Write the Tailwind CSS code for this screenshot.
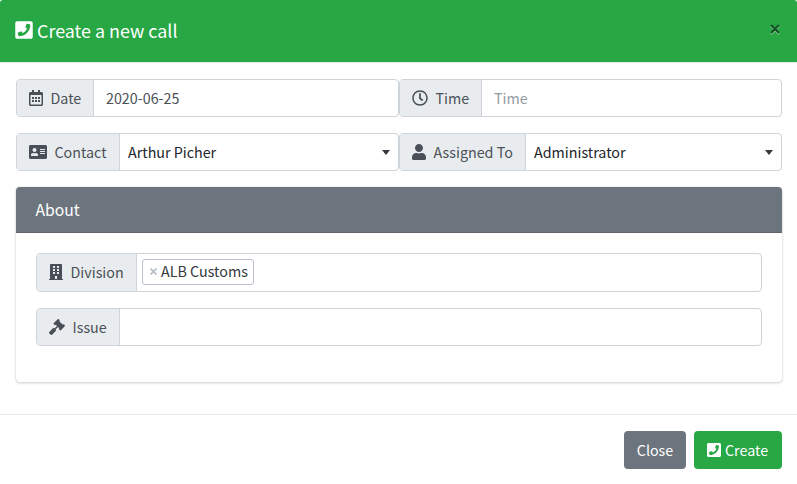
<!DOCTYPE html>
<html lang="en">
<head>
<meta charset="utf-8">
<title>Create a new call</title>
<script src="https://cdn.jsdelivr.net/npm/@tailwindcss/browser@4"></script>
</head>
<body class="bg-white">
<svg class="hidden">
  <symbol id="phone" viewBox="0 0 448 512"><path d="M400 32H48C21.49 32 0 53.49 0 80v352c0 26.51 21.49 48 48 48h352c26.51 0 48-21.49 48-48V80c0-26.51-21.49-48-48-48zM94 416c-7.033 0-13.057-4.873-14.616-11.627l-14.998-65a15 15 0 0 1 8.707-17.16l69.998-29.999a15 15 0 0 1 17.518 4.289l30.997 37.885c48.944-22.963 88.297-62.858 110.781-110.78l-37.886-30.997a15.001 15.001 0 0 1-4.289-17.518l30-69.998a15 15 0 0 1 17.16-8.707l65 14.998A14.997 14.997 0 0 1 384 126c0 160.292-129.945 290-290 290z"/></symbol>
</svg>
<main class="flex h-[484px] w-[797px] flex-col overflow-hidden bg-white font-['Noto_Sans_CJK_SC','Noto_Sans',sans-serif] text-[14.3px] leading-6 text-[#495057]">
  <header class="flex h-[63px] shrink-0 items-center rounded-t-[3px] border-b border-[#e9ecef] bg-[#28a745] pr-[16px] pl-[15px] text-white">
    <svg class="mt-[-2px] h-5 w-[18px] shrink-0 fill-current"><use href="#phone"/></svg>
    <h1 class="mb-[2px] ml-1 flex-1 text-[17.9px] leading-[30px] whitespace-nowrap">Create a new call</h1>
    <button class="mb-1 flex w-[12px] justify-center" aria-label="Close">
      <svg class="h-[11px] w-[10px]" viewBox="0 0 10 11" fill="none" stroke-width="2.2"><path stroke="#8fd09f" d="M1 2l8 8M9 2l-8 8"/><path stroke="#145323" d="M1 1l8 8M9 1L1 9"/></svg>
    </button>
  </header>

  <section class="flex h-[351px] shrink-0 flex-col px-[16px] pt-[16px]">
    <div class="grid grid-cols-[383px_383px] gap-y-4">
      <div class="flex h-[38px] rounded-[4px] border border-[#ced4da]">
        <label class="flex w-[77px] items-center rounded-l-[3px] border-r border-[#ced4da] bg-[#e9ecef] pl-[11.500px]">
          <svg class="h-4 w-[14px] fill-current" viewBox="0 0 448 512"><path d="M148 288h-40c-6.6 0-12-5.4-12-12v-40c0-6.6 5.400-12 12-12h40c6.600 0 12 5.400 12 12v40c0 6.600-5.400 12-12 12zm108-12v-40c0-6.600-5.400-12-12-12h-40c-6.600 0-12 5.400-12 12v40c0 6.600 5.400 12 12 12h40c6.600 0 12-5.400 12-12zm96 0v-40c0-6.600-5.400-12-12-12h-40c-6.600 0-12 5.400-12 12v40c0 6.600 5.400 12 12 12h40c6.600 0 12-5.400 12-12zm-96 96v-40c0-6.600-5.400-12-12-12h-40c-6.600 0-12 5.400-12 12v40c0 6.600 5.400 12 12 12h40c6.600 0 12-5.400 12-12zm-96 0v-40c0-6.600-5.400-12-12-12h-40c-6.600 0-12 5.400-12 12v40c0 6.600 5.400 12 12 12h40c6.600 0 12-5.400 12-12zm192 0v-40c0-6.600-5.400-12-12-12h-40c-6.600 0-12 5.400-12 12v40c0 6.600 5.400 12 12 12h40c6.600 0 12-5.400 12-12zm96-260v352c0 26.500-21.500 48-48 48H48c-26.500 0-48-21.500-48-48V112c0-26.500 21.500-48 48-48h48V12c0-6.600 5.400-12 12-12h40c6.600 0 12 5.400 12 12v52h128V12c0-6.600 5.400-12 12-12h40c6.600 0 12 5.400 12 12v52h48c26.500 0 48 21.500 48 48zm-48 346V160H48v298c0 3.300 2.700 6 6 6h340c3.300 0 6-2.700 6-6z"/></svg>
          <span class="ml-[8px]">Date</span>
        </label>
        <span class="flex items-center pl-[12px]">2020-06-25</span>
      </div>
      <div class="flex h-[38px] rounded-[4px] border border-[#ced4da]">
        <label class="flex w-[82px] items-center rounded-l-[3px] border-r border-[#ced4da] bg-[#e9ecef] pl-[11.500px]">
          <svg class="size-4 fill-current" viewBox="0 0 512 512"><path d="M256 8C119 8 8 119 8 256s111 248 248 248 248-111 248-248S393 8 256 8zm0 448c-110.500 0-200-89.500-200-200S145.500 56 256 56s200 89.500 200 200-89.500 200-200 200zm61.800-104.400l-84.900-61.700c-3.100-2.300-4.900-5.900-4.900-9.700V116c0-6.600 5.400-12 12-12h32c6.600 0 12 5.400 12 12v141.700l66.800 48.600c5.400 3.900 6.500 11.400 2.600 16.800L334.600 349c-3.900 5.300-11.400 6.500-16.800 2.600z"/></svg>
          <span class="ml-[8px]">Time</span>
        </label>
        <span class="flex items-center pl-[12px] text-[#939ba2]">Time</span>
      </div>
      <div class="flex h-[38px] rounded-[4px] border border-[#ced4da]">
        <label class="flex w-[103px] items-center rounded-l-[3px] border-r border-[#ced4da] bg-[#e9ecef] pl-[11.500px]">
          <svg class="h-4 w-[18px] fill-current" viewBox="0 0 576 512"><path d="M528 32H48C21.500 32 0 53.500 0 80v352c0 26.500 21.500 48 48 48h480c26.500 0 48-21.500 48-48V80c0-26.500-21.500-48-48-48zm-352 96c35.300 0 64 28.700 64 64s-28.700 64-64 64-64-28.700-64-64 28.700-64 64-64zm112 236.800c0 10.600-10 19.200-22.400 19.200H86.400C74 384 64 375.400 64 364.800v-19.200c0-31.800 30.100-57.600 67.200-57.600h5c12.300 5.100 25.700 8 39.800 8s27.600-2.900 39.800-8h5c37.100 0 67.200 25.800 67.200 57.600v19.200zM512 312c0 4.400-3.600 8-8 8H360c-4.400 0-8-3.600-8-8v-16c0-4.400 3.600-8 8-8h144c4.400 0 8 3.600 8 8v16zm0-64c0 4.400-3.600 8-8 8H360c-4.400 0-8-3.600-8-8v-16c0-4.400 3.600-8 8-8h144c4.400 0 8 3.600 8 8v16zm0-64c0 4.400-3.600 8-8 8H360c-4.400 0-8-3.600-8-8v-16c0-4.400 3.600-8 8-8h144c4.400 0 8 3.600 8 8v16z"/></svg>
          <span class="ml-[8px]">Contact</span>
        </label>
        <div class="flex flex-1 items-center justify-between pr-[8px] pl-[8px] text-[#212529]"><span>Arthur Picher</span><svg class="h-[5px] w-[8px] fill-[#343a40]" viewBox="0 0 8 5"><path d="M0 0h8L4 5z"/></svg></div>
      </div>
      <div class="flex h-[38px] rounded-[4px] border border-[#ced4da]">
        <label class="flex w-[126px] items-center rounded-l-[3px] border-r border-[#ced4da] bg-[#e9ecef] pl-[11.500px]">
          <svg class="h-4 w-[14px] fill-current" viewBox="0 0 448 512"><path d="M224 256c70.700 0 128-57.300 128-128S294.700 0 224 0 96 57.300 96 128s57.300 128 128 128zm89.600 32h-16.700c-22.200 10.200-46.900 16-72.900 16s-50.600-5.800-72.900-16h-16.700C60.200 288 0 348.200 0 422.400V464c0 26.500 21.500 48 48 48h352c26.500 0 48-21.500 48-48v-41.600c0-74.200-60.200-134.400-134.400-134.400z"/></svg>
          <span class="ml-[8px] whitespace-nowrap">Assigned To</span>
        </label>
        <div class="flex flex-1 items-center justify-between pr-[8px] pl-[8px] text-[#212529]"><span>Administrator</span><svg class="h-[5px] w-[8px] fill-[#343a40]" viewBox="0 0 8 5"><path d="M0 0h8L4 5z"/></svg></div>
      </div>
    </div>

    <article class="mt-4 h-[195px] w-[766px] rounded-[4px] bg-white shadow-[0_0_1px_rgba(0,0,0,0.125),0_1px_3px_rgba(0,0,0,0.2)]">
      <h2 class="flex h-[46px] items-center rounded-t-[4px] border-b border-[#5f666d] bg-[#6c757d] pl-[19.500px] text-[15.7px] text-white">About</h2>
      <div class="flex flex-col gap-4 px-[20px] pt-[20px]">
        <div class="flex h-[39px] rounded-[4px] border border-[#ced4da]">
          <label class="flex w-[100px] items-center rounded-l-[3px] border-r border-[#ced4da] bg-[#e9ecef] pb-px pl-[11.500px]">
            <svg class="h-4 w-[14px] fill-current" viewBox="0 0 448 512"><path fill-rule="evenodd" d="M436 480h-20V24c0-13.255-10.745-24-24-24H56C42.745 0 32 10.745 32 24v456H12c-6.627 0-12 5.373-12 12v20h448v-20c0-6.627-5.373-12-12-12zM128 64h64v64h-64zM256 64h64v64h-64zM128 160h64v64h-64zM256 160h64v64h-64zM128 256h64v64h-64zM256 256h64v64h-64zM192 384h64v96h-64z"/></svg>
            <span class="ml-[8px]">Division</span>
          </label>
          <div class="flex items-start pt-[5px] pl-[5px]">
            <span class="flex h-[26px] w-[112px] items-center rounded-[3px] border border-[#b9c2cc] pb-[2px] pl-[6.500px] whitespace-nowrap text-[#343a40]"><svg class="mt-px mr-[4.500px] size-[7px] shrink-0" viewBox="0 0 7 7" fill="none" stroke="#b5bec7" stroke-width="1.6"><path d="M.5 .5l6 6M6.500 .5l-6 6"/></svg>ALB Customs</span>
          </div>
        </div>
        <div class="flex h-[38px] rounded-[4px] border border-[#ced4da]">
          <label class="flex w-[83px] items-center rounded-l-[3px] border-r border-[#ced4da] bg-[#e9ecef] pl-[11.500px]">
            <svg class="size-4 fill-current" viewBox="0 0 512 512"><path d="M504.971 199.362l-22.627-22.627c-9.373-9.373-24.569-9.373-33.941 0l-5.657 5.657L329.608 69.255l5.657-5.657c9.373-9.373 9.373-24.569 0-33.941L312.638 7.029c-9.373-9.373-24.569-9.373-33.941 0L154.246 131.480c-9.373 9.373-9.373 24.569 0 33.941l22.627 22.627c9.373 9.373 24.569 9.373 33.941 0l5.657-5.657 39.598 39.598-81.040 81.040-5.657-5.657c-12.497-12.497-32.758-12.497-45.255 0L9.373 412.118c-12.497 12.497-12.497 32.758 0 45.255l45.255 45.255c12.497 12.497 32.758 12.497 45.255 0l114.745-114.745c12.497-12.497 12.497-32.758 0-45.255l-5.657-5.657 81.040-81.040 39.598 39.598-5.657 5.657c-9.373 9.373-9.373 24.569 0 33.941l22.627 22.627c9.373 9.373 24.569 9.373 33.941 0l124.451-124.451c9.372-9.372 9.372-24.568 0-33.941z"/></svg>
            <span class="ml-[8px]">Issue</span>
          </label>
        </div>
      </div>
    </article>
  </section>

  <footer class="flex h-[70px] items-start justify-end gap-2 border-t border-[#e9ecef] pt-[16px] pr-[15px] text-white">
    <button class="flex h-[38px] w-[62px] items-center justify-center rounded-[4px] bg-[#6c757d]">Close</button>
    <button class="flex h-[38px] w-[88px] items-center rounded-[4px] bg-[#28a745] pl-[13px]"><svg class="h-4 w-[14px] fill-current"><use href="#phone"/></svg><span class="ml-[4px]">Create</span></button>
  </footer>
</main>
</body>
</html>
